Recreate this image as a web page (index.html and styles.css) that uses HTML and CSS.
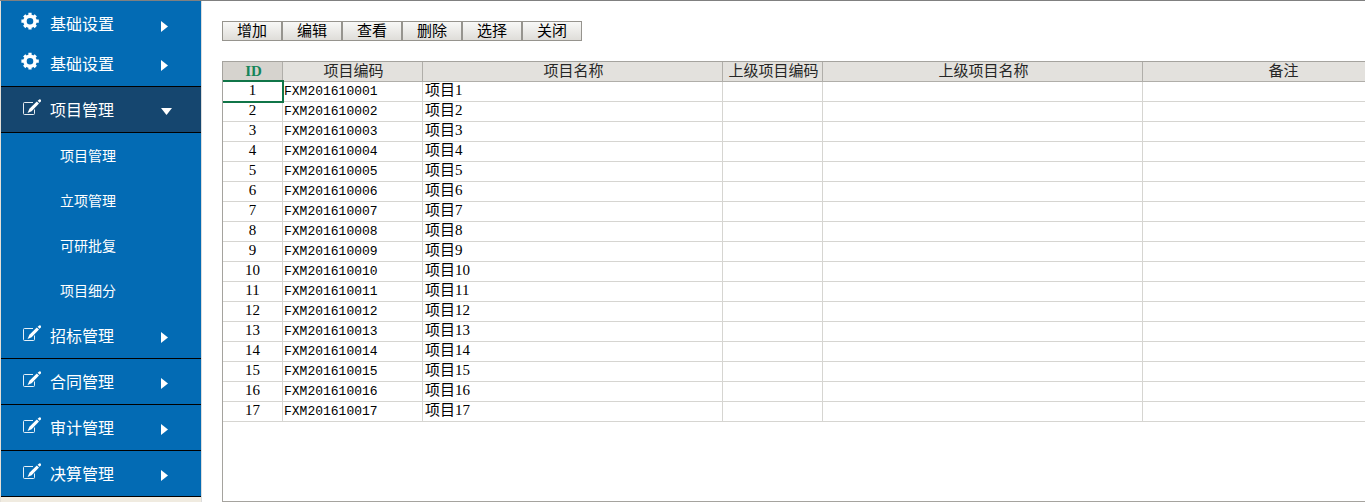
FILE: index.html
```html
<!DOCTYPE html>
<html lang="zh-CN">

<head>
    <meta charset="UTF-8" />
    <meta name="viewport" content="width=device-width, initial-scale=1.0" />
    <title>项目管理</title>
    <link rel="stylesheet" href="styles.css">
</head>

<body>
    <svg class="defs">
        <symbol id="gear" viewBox="0 0 20 20">
            <path d="M9 0.8V5M9 13V17.6M0.4 9.2H5M13 9.2H17.8M3.2 3.4L6 6.2M12 12.2L14.8 15M14.8 3.4L12 6.2M6 12.2L3.2 15" fill="none" stroke="currentColor" stroke-width="3.2" />
            <circle cx="9" cy="9.2" r="5" fill="none" stroke="currentColor" stroke-width="3.4" />
        </symbol>
        <symbol id="edit" viewBox="0 0 20 20">
            <path d="M12 4.5H3.5Q2.5 4.5 2.5 5.5V15.5Q2.5 16.5 3.5 16.5H12.5Q13.5 16.5 13.5 15.5V11.5" fill="none" stroke="currentColor" stroke-opacity=".9" />
            <path d="M6.6 15L8.4 10.8L15.8 3.4L18 5.6L10.6 13.2Z" fill="currentColor" />
            <path d="M16.6 2.8L18.2 1.4Q19.2 1 19.8 1.8Q20.2 2.6 19.8 3.4L18.6 4.8Z" fill="currentColor" />
        </symbol>
        <symbol id="right" viewBox="0 0 11 11">
            <path d="M0 0L7 5.5L0 11Z" fill="currentColor" />
        </symbol>
        <symbol id="down" viewBox="0 0 11 11">
            <path d="M0 2H11L5.5 9Z" fill="currentColor" />
        </symbol>
    </svg>

    <nav class="sidebar">
        <button class="menu short"><svg class="icon"><use href="#gear" /></svg>基础设置<svg class="arrow"><use href="#right" /></svg></button>
        <button class="menu"><svg class="icon"><use href="#gear" /></svg>基础设置<svg class="arrow"><use href="#right" /></svg></button>
        <button class="menu active"><svg class="icon"><use href="#edit" /></svg>项目管理<svg class="arrow"><use href="#down" /></svg></button>
        <div class="submenu">
            <a href="#">项目管理</a>
            <a href="#">立项管理</a>
            <a href="#">可研批复</a>
            <a href="#">项目细分</a>
        </div>
        <button class="menu"><svg class="icon"><use href="#edit" /></svg>招标管理<svg class="arrow"><use href="#right" /></svg></button>
        <button class="menu"><svg class="icon"><use href="#edit" /></svg>合同管理<svg class="arrow"><use href="#right" /></svg></button>
        <button class="menu"><svg class="icon"><use href="#edit" /></svg>审计管理<svg class="arrow"><use href="#right" /></svg></button>
        <button class="menu"><svg class="icon"><use href="#edit" /></svg>决算管理<svg class="arrow"><use href="#right" /></svg></button>
    </nav>

    <main class="main">
        <div class="toolbar">
            <button>增加</button>
            <button>编辑</button>
            <button>查看</button>
            <button>删除</button>
            <button>选择</button>
            <button>关闭</button>
        </div>

        <div class="grid">
            <table>
                <colgroup>
                    <col class="col-id">
                    <col class="col-code">
                    <col class="col-name">
                    <col class="col-pcode">
                    <col class="col-pname">
                    <col class="col-note">
                </colgroup>
                <thead>
                    <tr>
                        <th class="current">ID</th>
                        <th>项目编码</th>
                        <th>项目名称</th>
                        <th>上级项目编码</th>
                        <th>上级项目名称</th>
                        <th>备注</th>
                    </tr>
                </thead>
                <tbody>
                    <tr><td class="id selected">1</td><td class="code">FXM201610001</td><td>项目1</td><td></td><td></td><td></td></tr>
                    <tr><td class="id">2</td><td class="code">FXM201610002</td><td>项目2</td><td></td><td></td><td></td></tr>
                    <tr><td class="id">3</td><td class="code">FXM201610003</td><td>项目3</td><td></td><td></td><td></td></tr>
                    <tr><td class="id">4</td><td class="code">FXM201610004</td><td>项目4</td><td></td><td></td><td></td></tr>
                    <tr><td class="id">5</td><td class="code">FXM201610005</td><td>项目5</td><td></td><td></td><td></td></tr>
                    <tr><td class="id">6</td><td class="code">FXM201610006</td><td>项目6</td><td></td><td></td><td></td></tr>
                    <tr><td class="id">7</td><td class="code">FXM201610007</td><td>项目7</td><td></td><td></td><td></td></tr>
                    <tr><td class="id">8</td><td class="code">FXM201610008</td><td>项目8</td><td></td><td></td><td></td></tr>
                    <tr><td class="id">9</td><td class="code">FXM201610009</td><td>项目9</td><td></td><td></td><td></td></tr>
                    <tr><td class="id">10</td><td class="code">FXM201610010</td><td>项目10</td><td></td><td></td><td></td></tr>
                    <tr><td class="id">11</td><td class="code">FXM201610011</td><td>项目11</td><td></td><td></td><td></td></tr>
                    <tr><td class="id">12</td><td class="code">FXM201610012</td><td>项目12</td><td></td><td></td><td></td></tr>
                    <tr><td class="id">13</td><td class="code">FXM201610013</td><td>项目13</td><td></td><td></td><td></td></tr>
                    <tr><td class="id">14</td><td class="code">FXM201610014</td><td>项目14</td><td></td><td></td><td></td></tr>
                    <tr><td class="id">15</td><td class="code">FXM201610015</td><td>项目15</td><td></td><td></td><td></td></tr>
                    <tr><td class="id">16</td><td class="code">FXM201610016</td><td>项目16</td><td></td><td></td><td></td></tr>
                    <tr><td class="id">17</td><td class="code">FXM201610017</td><td>项目17</td><td></td><td></td><td></td></tr>
                </tbody>
            </table>
        </div>
    </main>
</body>

</html>
```
FILE: styles.css
```css
* {
    box-sizing: border-box;
}

body {
    display: flex;
    height: 100vh;
    margin: 0;
    border-top: 1px solid #808080;
    background: white;
    overflow: hidden;
    font-family: "Liberation Serif", "Noto Sans CJK SC", serif;
    font-size: 15px;
}

.defs {
    display: none;
}

/* left menu */
.sidebar {
    flex: none;
    width: 202px;
    border-left: 1px solid #e4e0d8;
    border-right: 1px solid #dcdcdc;
    background: #f0ebe0;
    font-family: "Noto Sans CJK SC", sans-serif;
}

.menu {
    display: flex;
    align-items: center;
    width: 100%;
    height: 46px;
    padding: 0 29px 2px 20px;
    border: none;
    border-bottom: 1px solid black;
    background: #036bb4;
    color: white;
    font-family: inherit;
    font-size: 16px;
    line-height: 24px;
    text-align: left;
}

.menu.short {
    height: 40px;
    padding-top: 6px;
    border-bottom: none;
}

.menu.active {
    background: #15466f;
}

.icon {
    width: 20px;
    height: 20px;
    margin-right: 9px;
    margin-bottom: 2px;
}

.arrow {
    width: 11px;
    height: 11px;
    margin-left: auto;
    margin-top: 6px;
}

.submenu {
    background: #036bb4;
}

.submenu a {
    display: block;
    height: 45px;
    padding-left: 59px;
    color: white;
    font-size: 14px;
    line-height: 45px;
    text-decoration: none;
}

/* content */
.main {
    display: flex;
    flex: 1;
    flex-direction: column;
    gap: 20px;
    min-width: 0;
    padding: 20px 0 0 20px;
}

.toolbar {
    display: flex;
}

.toolbar button {
    width: 60px;
    height: 20px;
    padding: 0;
    border: 1px solid #96948e;
    background: linear-gradient(#f8f8f7, #dfddd9);
    color: black;
    font-family: inherit;
    font-size: 15px;
    line-height: 18px;
}

.grid {
    flex: 1;
    border: 1px solid #a5a39e;
    border-right: none;
    overflow: hidden;
}

table {
    width: 1200px;
    table-layout: fixed;
    border-collapse: separate;
    border-spacing: 0;
}

.col-id {
    width: 60px;
}

.col-code {
    width: 140px;
}

.col-name {
    width: 300px;
}

.col-pcode {
    width: 100px;
}

.col-pname {
    width: 320px;
}

.col-note {
    width: 280px;
}

th,
td {
    height: 20px;
    padding: 0 2px;
    border-right: 1px solid #d6d5d1;
    border-bottom: 1px solid #d6d5d1;
    line-height: 17px;
    white-space: nowrap;
}

td {
    padding-bottom: 2px;
}

th {
    padding-left: 4px;
    border-color: #b0aea9;
    background: #e3e1dd;
    color: #262626;
    font-weight: normal;
}

th.current {
    background: #d6d3ce;
    color: #17855a;
    font-weight: bold;
}

.id {
    text-align: center;
}

.code {
    padding: 0 1px;
    font-family: "Liberation Mono", monospace;
    font-size: 13px;
}

.selected {
    position: relative;
}

.selected::after {
    content: "";
    position: absolute;
    top: -2px;
    right: -2px;
    bottom: -2px;
    left: 0;
    border: 2px solid #107548;
    border-left: none;
}
```
